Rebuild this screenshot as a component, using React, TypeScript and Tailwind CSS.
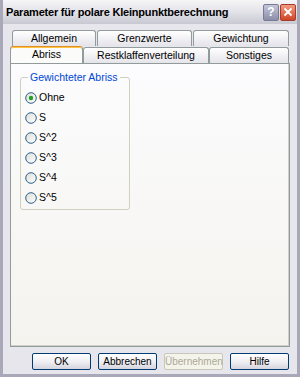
import { useState } from "react";

const row1 = [
  { label: "Allgemein", w: "w-[84px]" },
  { label: "Grenzwerte", w: "w-[95px]" },
  { label: "Gewichtung", w: "w-[96px]" },
];

const row2 = [
  { label: "Restklaffenverteilung", w: "w-[126px]" },
  { label: "Sonstiges", w: "w-[80px]" },
];

const options = ["Ohne", "S", "S^2", "S^3", "S^4", "S^5"];

function Radio({ checked }: { checked: boolean }) {
  return (
    <svg width="12" height="12" viewBox="0 0 12 12" className="shrink-0">
      <defs>
        <linearGradient id="rg" x1="0" y1="0" x2="1" y2="1">
          <stop offset="0" stopColor="#dcdcd6" />
          <stop offset="1" stopColor="#ffffff" />
        </linearGradient>
      </defs>
      <circle cx="6" cy="6" r="5.3" fill="url(#rg)" stroke="#2c628b" strokeWidth="1" />
      {checked && <circle cx="6" cy="6" r="2.2" fill="#21a121" />}
    </svg>
  );
}

function Button({ label, disabled }: { label: string; disabled?: boolean }) {
  return (
    <button
      type="button"
      className={`h-[17px] w-[59px] whitespace-nowrap rounded-[2px] border text-[10px] leading-none ${
        disabled
          ? "border-[#c9c7ba] bg-[#f5f4ea] text-[#aca899]"
          : "border-[#003c74] bg-gradient-to-b from-white via-[#f0f0f4] to-[#d6d4de] text-black"
      }`}
    >
      {label}
    </button>
  );
}

export default function App() {
  const [value, setValue] = useState("Ohne");

  return (
    <div
      className="flex h-[377px] w-[300px] flex-col border-x-[3px] border-b-[3px] border-[#a8a8b8] bg-[#e6e6ec]"
      style={{ fontFamily: '"Liberation Sans", Arial, sans-serif' }}
    >
      {/* title bar */}
      <div className="flex h-[24px] shrink-0 items-center bg-gradient-to-b from-[#f6f6f8] via-[#e2e2e8] to-[#c8c8d2] pl-[3px] pr-[1px]">
        <span className="flex-1 whitespace-nowrap text-[11px] font-bold tracking-[-0.2px] text-black">
          Parameter für polare Kleinpunktberechnung
        </span>
        <div className="flex gap-[1px]">
          <div className="flex h-[17px] w-[16px] items-center justify-center rounded-[2px] border border-[#7a7a94] bg-gradient-to-b from-[#c4c6dc] to-[#8c8ea8] text-[12px] font-bold text-white">
            ?
          </div>
          <div className="flex h-[17px] w-[16px] items-center justify-center rounded-[2px] border border-[#a83c2c] bg-gradient-to-b from-[#f09a80] to-[#d04424]">
            <svg width="10" height="10" viewBox="0 0 10 10">
              <path d="M1.5 1.5 L8.5 8.5 M8.5 1.5 L1.5 8.5" stroke="white" strokeWidth="1.8" />
            </svg>
          </div>
        </div>
      </div>

      <div className="flex flex-1 flex-col px-[7px] pt-[6px]">
        {/* tabs */}
        <div className="flex pl-[2px]">
          {row1.map((t) => (
            <div
              key={t.label}
              className={`${t.w} mr-[1px] flex h-[16px] items-center justify-center rounded-t-[3px] border border-b-0 border-[#919b9c] bg-gradient-to-b from-white to-[#e4e4ea] text-[10.5px] text-black`}
            >
              {t.label}
            </div>
          ))}
        </div>
        <div className="flex">
          <div className="relative z-10 -mb-[1px] flex h-[17px] w-[73px] items-center justify-center rounded-t-[3px] border border-b-0 border-[#919b9c] border-t-[#e68b2c] bg-[#fbfbf9] text-[10.5px] text-black shadow-[inset_0_1px_0_#ffc73c]">
            Abriss
          </div>
          {row2.map((t) => (
            <div
              key={t.label}
              className={`${t.w} mt-[1px] flex h-[16px] items-center justify-center rounded-t-[3px] border border-b-0 border-[#919b9c] bg-gradient-to-b from-white to-[#e4e4ea] text-[10.5px] text-black`}
            >
              {t.label}
            </div>
          ))}
        </div>

        {/* panel */}
        <div className="h-[284px] w-[280px] border border-[#919b9c] bg-gradient-to-b from-[#fcfcfe] to-[#f4f3ee] pl-[9px] pt-[6px] shadow-[inset_-1px_-1px_0_#d0d0c8]">
          <fieldset className="w-[110px] rounded-[3px] border border-[#d0d0bf] pb-[1px] pl-[4px] pt-[2px]">
            <legend className="ml-[3px] px-[2px] text-[10.5px] text-[#0046d5]">
              Gewichteter Abriss
            </legend>
            <div className="flex flex-col">
              {options.map((o) => (
                <label
                  key={o}
                  onClick={() => setValue(o)}
                  className="flex h-[20px] items-center gap-[2px] text-[10.5px] text-black"
                >
                  <Radio checked={value === o} />
                  {o}
                </label>
              ))}
            </div>
          </fieldset>
        </div>

        {/* buttons */}
        <div className="mt-[6px] flex justify-end gap-[7px] pr-[1px]">
          <Button label="OK" />
          <Button label="Abbrechen" />
          <Button label="Übernehmen" disabled />
          <Button label="Hilfe" />
        </div>
      </div>
    </div>
  );
}
